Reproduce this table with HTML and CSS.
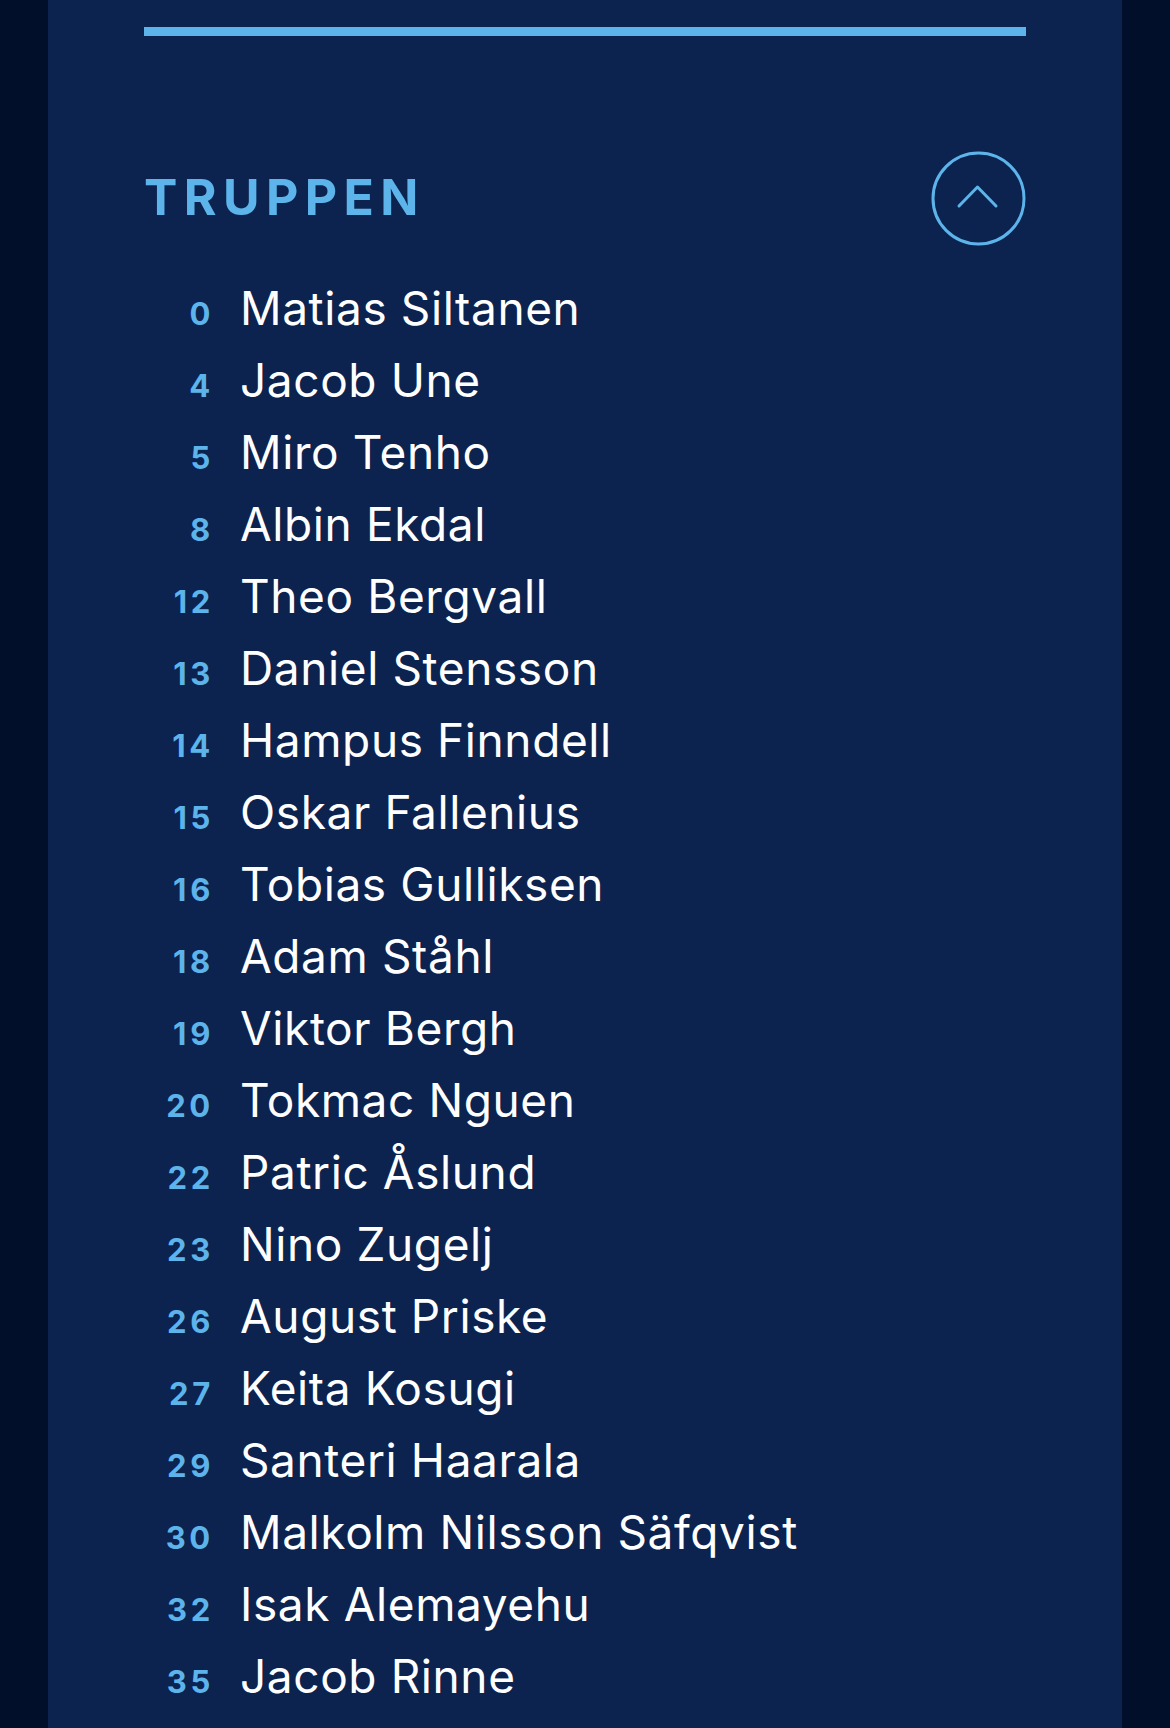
FILE: index.html
```html
<!DOCTYPE html>
<html lang="sv">
<head>
    <meta charset="UTF-8">
    <meta name="viewport" content="width=device-width, initial-scale=1.0">
    <title>Truppen</title>
    <link rel="stylesheet" href="styles.css">
</head>
<body>
    <div class="panel">
        <div class="top-bar"></div>

        <div class="squad-header">
            <h2 class="squad-title">TRUPPEN</h2>
            <button class="toggle-btn" aria-label="Dölj truppen">
                <svg width="95" height="95" viewBox="0 0 95 95">
                    <circle cx="47.5" cy="47.5" r="45.5" fill="none" stroke="#5db4ea" stroke-width="3"/>
                    <path d="M28 55 L46.5 36 L65 55" fill="none" stroke="#5db4ea" stroke-width="3" stroke-linecap="round" stroke-linejoin="round"/>
                </svg>
            </button>
        </div>

        <ul class="squad-list">
            <li><span class="num">0</span><span class="name">Matias Siltanen</span></li>
            <li><span class="num">4</span><span class="name">Jacob Une</span></li>
            <li><span class="num">5</span><span class="name">Miro Tenho</span></li>
            <li><span class="num">8</span><span class="name">Albin Ekdal</span></li>
            <li><span class="num">12</span><span class="name">Theo Bergvall</span></li>
            <li><span class="num">13</span><span class="name">Daniel Stensson</span></li>
            <li><span class="num">14</span><span class="name">Hampus Finndell</span></li>
            <li><span class="num">15</span><span class="name">Oskar Fallenius</span></li>
            <li><span class="num">16</span><span class="name">Tobias Gulliksen</span></li>
            <li><span class="num">18</span><span class="name">Adam Ståhl</span></li>
            <li><span class="num">19</span><span class="name">Viktor Bergh</span></li>
            <li><span class="num">20</span><span class="name">Tokmac Nguen</span></li>
            <li><span class="num">22</span><span class="name">Patric Åslund</span></li>
            <li><span class="num">23</span><span class="name">Nino Zugelj</span></li>
            <li><span class="num">26</span><span class="name">August Priske</span></li>
            <li><span class="num">27</span><span class="name">Keita Kosugi</span></li>
            <li><span class="num">29</span><span class="name">Santeri Haarala</span></li>
            <li><span class="num">30</span><span class="name">Malkolm Nilsson Säfqvist</span></li>
            <li><span class="num">32</span><span class="name">Isak Alemayehu</span></li>
            <li><span class="num">35</span><span class="name">Jacob Rinne</span></li>
        </ul>
    </div>
</body>
</html>
```

FILE: styles.css
```css
body {
    background-color: #020f2a;
    margin: 0;
    font-family: Inter, "Liberation Sans", sans-serif;
    height: 100vh;
    overflow: hidden;
}

.panel {
    margin: 0 48px;
    height: 100%;
    background-color: #0c2350;
    padding: 27px 96px 0 96px;
}

.top-bar {
    height: 9px;
    background-color: #5db4ea;
}

.squad-header {
    display: flex;
    align-items: center;
    justify-content: space-between;
    margin-top: 115px;
}

.squad-title {
    margin: 0 0 3px 0;
    color: #5db4ea;
    font-size: 50px;
    font-weight: 700;
    letter-spacing: 0.128em;
    line-height: 1;
}

.toggle-btn {
    width: 95px;
    height: 95px;
    padding: 0;
    border: none;
    background: none;
    cursor: pointer;
}

.toggle-btn svg {
    display: block;
}

.squad-list {
    list-style: none;
    margin: 26px 0 0 0;
    padding: 0;
}

.squad-list li {
    display: flex;
    align-items: baseline;
    height: 72px;
    line-height: 72px;
}

.num {
    width: 70px;
    text-align: right;
    color: #5db4ea;
    font-size: 31px;
    font-weight: 700;
    letter-spacing: 0.12em;
}

.name {
    margin-left: 26px;
    color: #ffffff;
    font-size: 46px;
    font-weight: 400;
    letter-spacing: 0.6px;
}
```
